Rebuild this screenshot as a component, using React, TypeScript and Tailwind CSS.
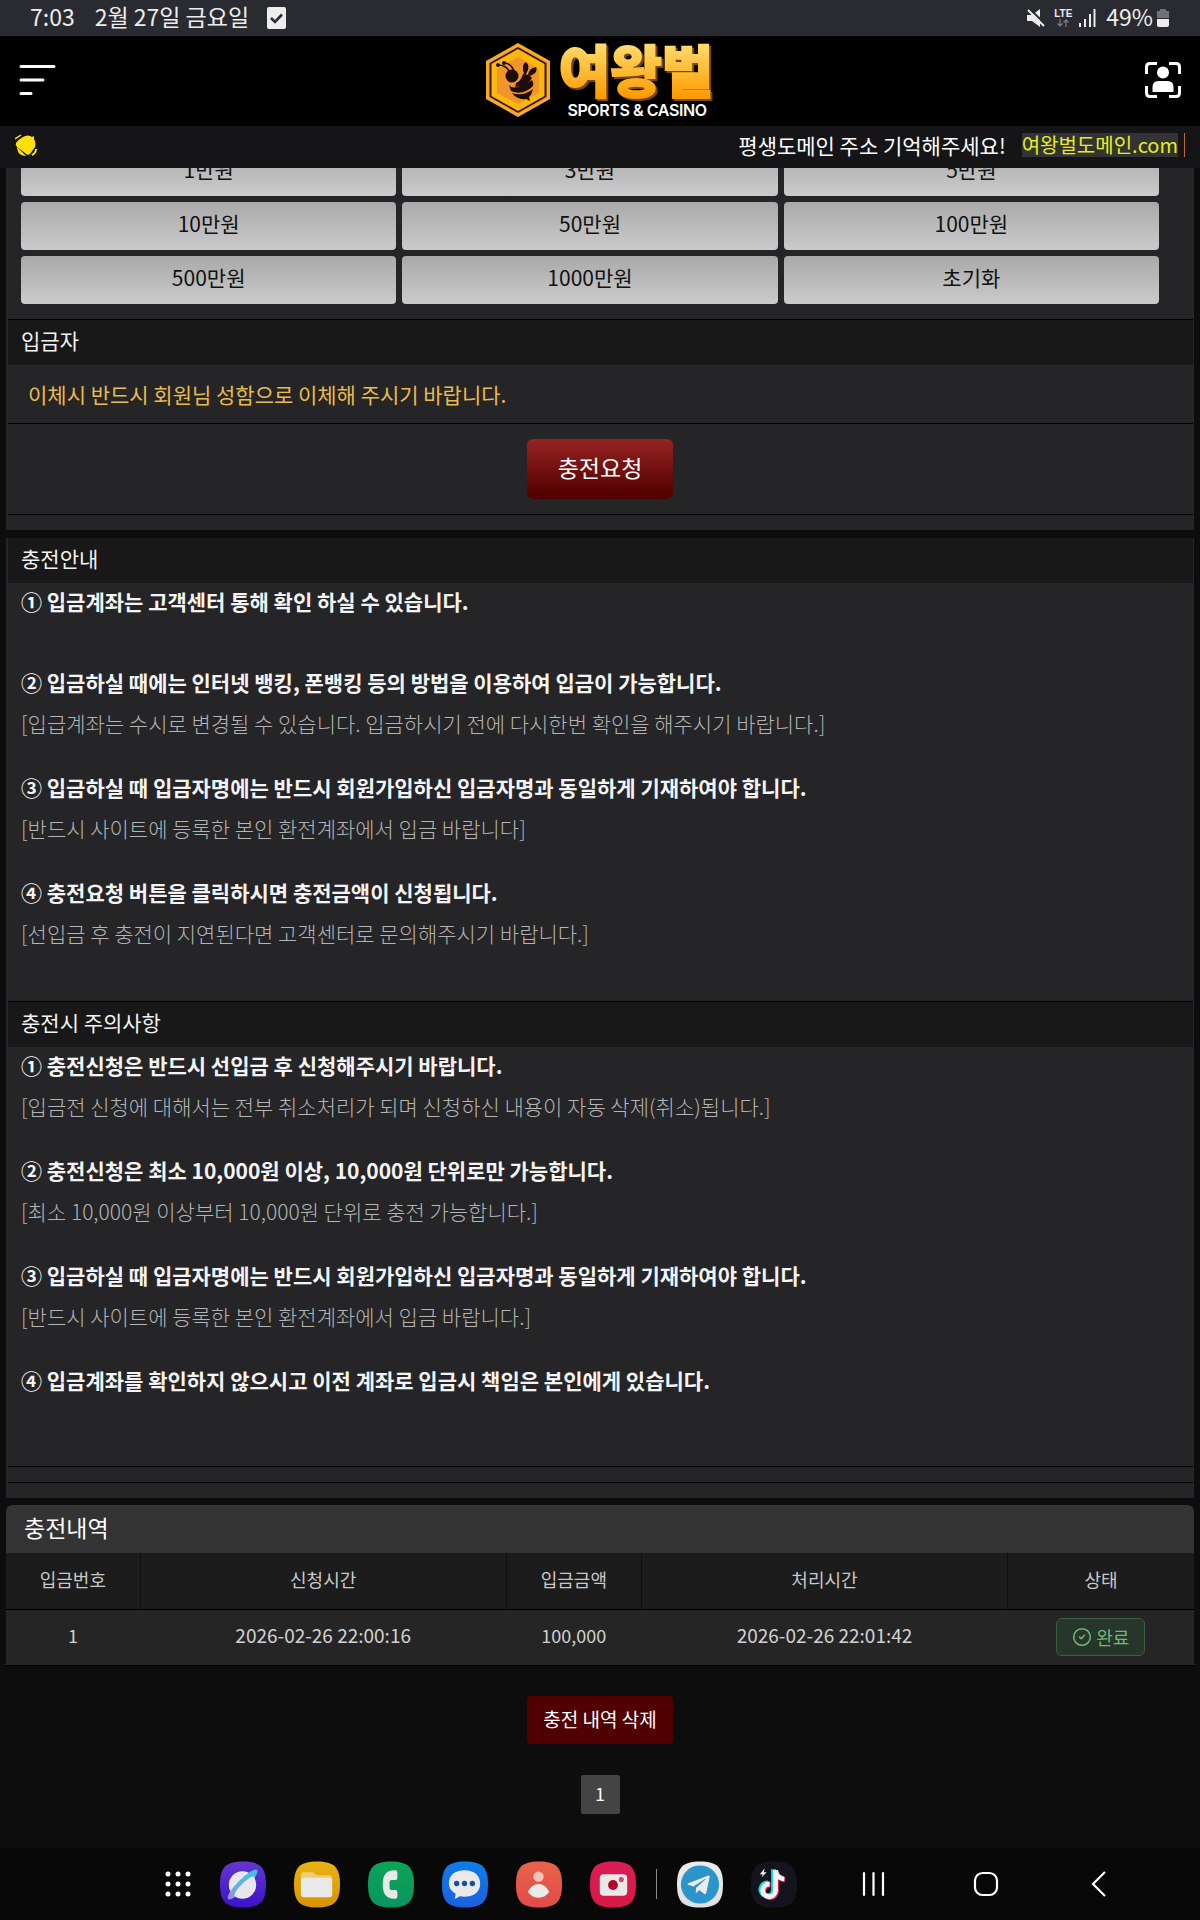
import type { ReactNode } from "react";
import { FaTelegramPlane } from "react-icons/fa";
import { LuCircleCheck } from "react-icons/lu";

const amounts = ["1만원", "3만원", "5만원", "10만원", "50만원", "100만원", "500만원", "1000만원", "초기화"];

const guide = [
    { title: "② 입금하실 때에는 인터넷 뱅킹, 폰뱅킹 등의 방법을 이용하여 입금이 가능합니다.", note: "[입급계좌는 수시로 변경될 수 있습니다. 입금하시기 전에 다시한번 확인을 해주시기 바랍니다.]" },
    { title: "③ 입금하실 때 입금자명에는 반드시 회원가입하신 입금자명과 동일하게 기재하여야 합니다.", note: "[반드시 사이트에 등록한 본인 환전계좌에서 입금 바랍니다]" },
    { title: "④ 충전요청 버튼을 클릭하시면 충전금액이 신청됩니다.", note: "[선입금 후 충전이 지연된다면 고객센터로 문의해주시기 바랍니다.]" },
];

const cautions = [
    { title: "① 충전신청은 반드시 선입금 후 신청해주시기 바랍니다.", note: "[입금전 신청에 대해서는 전부 취소처리가 되며 신청하신 내용이 자동 삭제(취소)됩니다.]" },
    { title: "② 충전신청은 최소 10,000원 이상, 10,000원 단위로만 가능합니다.", note: "[최소 10,000원 이상부터 10,000원 단위로 충전 가능합니다.]" },
    { title: "③ 입금하실 때 입금자명에는 반드시 회원가입하신 입금자명과 동일하게 기재하여야 합니다.", note: "[반드시 사이트에 등록한 본인 환전계좌에서 입금 바랍니다.]" },
    { title: "④ 입금계좌를 확인하지 않으시고 이전 계좌로 입금시 책임은 본인에게 있습니다." },
];

function StatusBar() {
    return <div className="flex h-9 items-center justify-between bg-[#2a2b30] pr-[31px] pl-[30px] text-[23px] leading-8 text-[#ededed]">
        <div className="flex items-center">
            <span className="pb-1">7:03</span>
            <span className="ml-5 pb-1">2월 27일 금요일</span>
            <svg className="ml-[18px] h-6 w-[19px]" viewBox="0 0 19 24">
                <rect y="1" width="19" height="22" rx="2" fill="#ededed" />
                <path d="M4 12l4 4 7-7.500" fill="none" stroke="#2a2b30" strokeWidth="2.600" />
            </svg>
        </div>
        <div className="flex items-center">
            <svg className="h-[18px] w-[18px]" viewBox="0 0 18 18" fill="#ededed">
                <path d="M0 6h5l8-6v18l-8-6H0z" />
                <path d="M2 -1l17 17" stroke="#2a2b30" strokeWidth="2" />
                <path d="M1 1l16 16" stroke="#ededed" strokeWidth="2" />
            </svg>
            <div className="ml-2 flex w-5 flex-col items-center">
                <span className="font-['Liberation_Sans'] text-[10px] leading-[10px] font-bold">LTE</span>
                <svg className="h-2 w-3" viewBox="0 0 12 8" fill="none" stroke="#77787c" strokeWidth="1.300">
                    <path d="M3 0v7M.5 4.500L3 7l2.500-2.500M9 8V1M6.500 3.500L9 1l2.500 2.500" />
                </svg>
            </div>
            <svg className="ml-1.5 h-[18px] w-[17px]" viewBox="0 0 17 18" stroke="#ededed" strokeWidth="2">
                <path d="M1 14v4M6 10v8M11 5v13" />
                <path d="M15.500 0v18" />
            </svg>
            <span className="ml-2.5 pb-1">49%</span>
            <svg className="ml-1 h-[18px] w-3" viewBox="0 0 12 18">
                <path d="M3 0h6v2h3v7H0V2h3z" fill="#717276" />
                <path d="M0 10h12v6q0 2-2 2H2q-2 0-2-2z" fill="#ededed" />
            </svg>
        </div>
    </div>
}

function Logo() {
    return <a href="#" className="flex items-center gap-1.5">
        <svg className="h-[76px] w-[66px]" viewBox="0 0 66 76">
            <path d="M33 1L65 19v38L33 75 1 57V19z" fill="#f9a92b" />
            <path d="M33 5L61.500 21v34L33 71 4.500 55V21z" fill="#3a1606" />
            <path d="M33 7L59.500 22v32L33 69 6.500 54V22z" fill="#fbb80c" />
            <path d="M33 15L54 27v24L33 62 12 51V27z" fill="#f0952b" />
            <g fill="#1d0c08">
                <circle cx="27" cy="34" r="6.500" />
                <path d="M39 32Q36 22 41 20Q46 24 41 32z" />
                <path d="M43 33Q44 26 51 25Q54 30 45 34z" />
                <path d="M31 41Q36 39 38 32Q44 32 47 36Q42 45 30 45z" />
                <path d="M24 43Q29 50 47 38Q49 41 48 44Q38 54 26 49z" />
                <path d="M27 51Q38 55 48 47Q47 52 44 55L45 59 41 57Q32 58 27 51z" />
                <circle cx="13" cy="23" r="2" />
                <circle cx="19" cy="21" r="2" />
            </g>
            <path d="M13 23Q21 23 24 29M19 21Q26 21 29 29" fill="none" stroke="#1d0c08" strokeWidth="1.500" />
        </svg>
        <svg className="h-[76px] w-[158px] overflow-visible" viewBox="0 0 158 76" textAnchor="middle">
            <defs>
                <linearGradient id="gold" gradientUnits="userSpaceOnUse" x1="0" y1="4" x2="0" y2="56">
                    <stop stopColor="#ffd968" />
                    <stop offset="1" stopColor="#ff9a00" />
                </linearGradient>
            </defs>
            <text x="79" y="50" fontSize="56" fontWeight="900" fill="url(#gold)" stroke="url(#gold)" strokeWidth="2" className="drop-shadow-[2px_2px_0_#7a4700]">여왕벌</text>
            <text x="80" y="74" fontFamily="Inter" fontSize="16" fontWeight="600" fill="#fff" className="tracking-tight">SPORTS &amp; CASINO</text>
        </svg>
    </a>
}

function Header() {
    return <header className="grid h-[90px] grid-cols-3 items-center bg-black px-[18px] pb-0.5">
        <button type="button" aria-label="메뉴" className="justify-self-start">
            <svg className="h-8 w-10" viewBox="0 0 40 32" stroke="#fff" strokeWidth="3" strokeLinecap="round">
                <path d="M3 2.500h33M3 16h22M3 29.500h10" />
            </svg>
        </button>
        <div className="justify-self-center">
            <Logo />
        </div>
        <button type="button" aria-label="내 정보" className="justify-self-end">
            <svg className="h-[38px] w-[38px]" viewBox="0 0 38 38" fill="#fff">
                <path d="M13 2.500H6Q2.500 2.500 2.500 6v7M25 2.500h7Q35.500 2.500 35.500 6v7M13 35.500H6Q2.500 35.500 2.500 32v-7M25 35.500h7Q35.500 35.500 35.500 32v-7" fill="none" stroke="#fff" strokeWidth="3" />
                <circle cx="19" cy="11.500" r="6" />
                <path d="M8.500 31v-5q0-6 6-6h9q6 0 6 6v5z" />
            </svg>
        </button>
    </header>
}

function Notice() {
    return <div className="flex h-[42px] items-center justify-between bg-[#151517] px-[15px] pb-1 text-[21px] text-white">
        <svg className="h-[22px] w-[22px]" viewBox="0 0 22 22" fill="#ffdf0e">
            <path d="M1 9Q4 5 8 3Q13 0 17 3l2-1v3Q21 8 20 13L15 20Q12 22 10 19L2 13Q0 11 1 9z" />
            <path d="M0 5L6 1M3 15q1 5 6 6z" stroke="#ffdf0e" strokeWidth="1.500" />
            <path d="M17 21q4-2 4-6" fill="none" stroke="#ffdf0e" strokeWidth="2" />
        </svg>
        <div className="flex items-center leading-6">
            <span>평생도메인 주소 기억해주세요!</span>
            <a href="#" className="ml-4 bg-[#333] text-[20px] text-[#e6ee1c]">여왕벌도메인.com</a>
            <span className="ml-1.5 h-6 w-px bg-[#c06a3a]" />
        </div>
    </div>
}

function SectionTitle({ children }: { children: ReactNode }) {
    return <h2 className="h-[45px] bg-[#181818] pl-[13px] text-[21px] leading-10 text-[#f2f2f2]">{children}</h2>
}

function GuideItem({ title, note }: { title: string; note?: string }) {
    return <li>
        <p className="font-bold text-[#f4f4f4]">{title}</p>
        {note && <p className="mt-[5px] mb-7 font-light text-[#b4b4b4]">{note}</p>}
    </li>
}

function History() {
    return <section className="mt-[7px]">
        <h2 className="h-12 rounded-t-md bg-[#333] pl-[18px] text-[23px] leading-11 text-white">충전내역</h2>
        <table className="w-full table-fixed border-collapse text-center text-lg text-[#d2d2d2]">
            <colgroup>
                <col className="w-[11.3%]" />
                <col className="w-[30.8%]" />
                <col className="w-[11.4%]" />
                <col className="w-[30.8%]" />
                <col />
            </colgroup>
            <thead>
                <tr className="h-14 border-b border-black bg-[#1c1c1c] text-[#c8c8c8]">
                    <th className="border-r border-[#101010] pb-1 font-normal">입금번호</th>
                    <th className="border-r border-[#101010] pb-1 font-normal">신청시간</th>
                    <th className="border-r border-[#101010] pb-1 font-normal">입금금액</th>
                    <th className="border-r border-[#101010] pb-1 font-normal">처리시간</th>
                    <th className="pb-1 font-normal">상태</th>
                </tr>
            </thead>
            <tbody>
                <tr className="h-14 border-b border-black bg-[#252525]">
                    <td className="pb-1">1</td>
                    <td className="pb-1 text-[19px]">2026-02-26 22:00:16</td>
                    <td className="pb-1">100,000</td>
                    <td className="pb-1 text-[19px]">2026-02-26 22:01:42</td>
                    <td>
                        <span className="inline-flex h-[38px] w-[89px] items-center justify-center gap-1 rounded-md border border-[#3b5f40] bg-[#27362a] align-middle leading-8 text-[#72b877]">
                            <LuCircleCheck className="h-5 w-5" strokeWidth={1.8} />
                            완료
                        </span>
                    </td>
                </tr>
            </tbody>
        </table>
    </section>
}

// rounded-square backplate shared by every dock app
function AppIcon({ label, from, to, children }: { label: string; from: string; to: string; children: ReactNode }) {
    const id = "bg-" + label;
    return <button type="button" aria-label={label}>
        <svg className="h-[47px] w-[46px]" viewBox="0 0 47 47">
            <defs>
                <linearGradient id={id} x2="0" y2="1">
                    <stop stopColor={from} />
                    <stop offset="1" stopColor={to} />
                </linearGradient>
            </defs>
            <path d="M23.500 0C41 0 47 6 47 23.500S41 47 23.500 47 0 41 0 23.500 6 0 23.500 0z" fill={`url(#${id})`} />
            {children}
        </svg>
    </button>
}

function Dock() {
    return <nav className="flex h-[72px] items-center bg-[#080808] pl-[164px]">
        <div className="flex items-center gap-7">
            <button type="button" aria-label="앱">
                <svg className="h-7 w-7" viewBox="0 0 28 28" fill="none" stroke="#fff" strokeWidth="5" strokeLinecap="round">
                    <path d="M4 4h0M14 4h0M24 4h0M4 14h0M14 14h0M24 14h0M4 24h0M14 24h0M24 24h0" />
                </svg>
            </button>
            <AppIcon label="internet" from="#6437cf" to="#3b12c8">
                <defs>
                    <linearGradient id="ring" x1="0" y1="0" x2="1" y2="0">
                        <stop stopColor="#9a8aea" />
                        <stop offset=".4" stopColor="#62b4dc" />
                        <stop offset="1" stopColor="#3fc4e0" />
                    </linearGradient>
                </defs>
                <circle cx="23" cy="24" r="14" fill="#e8e8ec" />
                <ellipse cx="23" cy="23.500" rx="21" ry="5" transform="rotate(-45 23 23.500)" fill="url(#ring)" />
                <ellipse cx="25" cy="25.500" rx="14" ry="3.500" transform="rotate(-45 25 25.500)" fill="#e8e8ec" />
            </AppIcon>
            <AppIcon label="files" from="#e8b414" to="#d89200">
                <path d="M7 14q0-3 3-3h9l5 3h12q3 0 3 3v4H7z" fill="#f0cd72" />
                <rect x="7" y="16.500" width="32" height="20" rx="3" fill="#e9e9e9" />
            </AppIcon>
            <AppIcon label="phone" from="#0ca458" to="#089460">
                <path d="M28 9q2 0 2 2v6q0 2-2 2h-4q-2 0-2 2v6q0 2 2 2h4q2 0 2 2v5q0 2-2 2-13 1-13-14.500T28 9z" fill="#e9e9e9" />
            </AppIcon>
            <AppIcon label="messages" from="#0e7ee8" to="#1c60e0">
                <path d="M23 9c10 0 16 5 16 13.500S33 36 23 36q-3 0-5-.5-2 2-5 2.500l1-5Q7 29 7 22.500C7 14 13 9 23 9z" fill="#e9e9e9" />
                <path d="M15 22.500h0M23 22.500h0M31 22.500h0" stroke="#17539c" strokeWidth="5.500" strokeLinecap="round" />
            </AppIcon>
            <AppIcon label="contacts" from="#e9634b" to="#e14c48">
                <circle cx="23" cy="15.500" r="5.300" fill="#f3c3b8" />
                <path d="M12 31Q16 23 23 23t11 8Q30 37 23 37T12 31z" fill="#ececec" />
            </AppIcon>
            <AppIcon label="camera" from="#d81e56" to="#d81846">
                <rect x="10" y="13" width="28" height="22" rx="4" fill="#e9e9e9" />
                <circle cx="23.500" cy="24" r="5" fill="#b4042c" />
                <circle cx="32" cy="18.500" r="2.600" fill="#d2456b" />
            </AppIcon>
        </div>
        <span className="mx-5 h-[30px] w-px bg-[#8a8a8a]" />
        <div className="flex items-center gap-7">
            <AppIcon label="telegram" from="#ececec" to="#e0e0e0">
                <circle cx="23.500" cy="23.500" r="19.500" fill="#2b95cb" />
                <FaTelegramPlane x="9" y="11" size="26" color="#ececec" />
            </AppIcon>
            <AppIcon label="tiktok" from="#14141f" to="#14141f">
                <g fill="none" strokeWidth="5">
                    <path d="M24 8v21a6.500 6.500 0 1 1-6-7M24 8q1 8 9 9" stroke="#20d5cf" transform="translate(-1 0)" />
                    <path d="M24 8v21a6.500 6.500 0 1 1-6-7M24 8q1 8 9 9" stroke="#e8254f" transform="translate(2 2)" />
                    <path d="M24 8v21a6.500 6.500 0 1 1-6-7M24 8q1 8 9 9" stroke="#f2f2f2" transform="translate(1 1)" />
                </g>
                <path d="M14 7l-5 6h3l-1 3 5-5h-3z" fill="#f2f2f2" />
            </AppIcon>
        </div>
        <div className="ml-14 flex items-center gap-[73px]">
            <button type="button" aria-label="최근 앱">
                <svg className="h-7 w-10" viewBox="0 0 40 28" stroke="#fff" strokeWidth="2.200" strokeLinecap="round">
                    <path d="M11 3v22M20.500 3v22M30 3v22" />
                </svg>
            </button>
            <button type="button" aria-label="홈">
                <svg className="h-7 w-10" viewBox="0 0 40 28" fill="none" stroke="#fff" strokeWidth="2.200">
                    <rect x="9" y="3" width="22" height="22" rx="7.500" />
                </svg>
            </button>
            <button type="button" aria-label="뒤로">
                <svg className="h-7 w-10" viewBox="0 0 40 28" fill="none" stroke="#fff" strokeWidth="2.200">
                    <path d="M26 2L14 14l12 12" />
                </svg>
            </button>
        </div>
    </nav>
}

export default function App() {
    return <div className="flex min-h-screen flex-col bg-[#0d0d0d] font-['Noto_Sans_CJK_KR',sans-serif]">
        <div className="sticky top-0 z-10">
            <StatusBar />
            <Header />
            <Notice />
        </div>
        <main className="flex-1 px-1.5">
            <section className="-mt-5 border-r border-l-2 border-[#252527] bg-[#252527] pb-[15px]">
                <div className="grid grid-cols-3 gap-1.5 border-b border-black pr-[34px] pb-[15px] pl-[13px]">
                    {amounts.map((amount) => (
                        <button key={amount} type="button" className="h-12 rounded bg-linear-to-b from-[#a9a9a9] to-[#cbcbcb] pb-1 text-[21px] text-[#111]">{amount}</button>
                    ))}
                </div>
                <SectionTitle>입금자</SectionTitle>
                <p className="border-b border-black pl-5 text-[21px] leading-[58px] text-[#e9bb4c]">이체시 반드시 회원님 성함으로 이체해 주시기 바랍니다.</p>
                <div className="flex justify-center border-b border-black py-[15px] pr-px">
                    <button type="button" className="h-[60px] w-[146px] rounded-md bg-linear-to-b from-[#972222] to-[#500000] pb-1 text-[23px] text-white">충전요청</button>
                </div>
            </section>

            <section className="mt-2 border-r border-l-2 border-[#252527] bg-[#252527] pb-[15px]">
                <SectionTitle>충전안내</SectionTitle>
                <div className="border-b border-black pb-[22px] pl-[13px] text-[21px] leading-9">
                    <p className="mb-[45px] font-bold text-[#f4f4f4]">① 입금계좌는 고객센터 통해 확인 하실 수 있습니다.</p>
                    <ul>
                        {guide.map((item) => <GuideItem key={item.title} title={item.title} note={item.note} />)}
                    </ul>
                </div>
                <SectionTitle>충전시 주의사항</SectionTitle>
                <ul className="border-b border-black pb-[68px] pl-[13px] text-[21px] leading-9">
                    {cautions.map((item) => <GuideItem key={item.title} title={item.title} note={item.note} />)}
                </ul>
                <div className="h-4 border-b border-black" />
            </section>

            <History />

            <div className="mt-[30px] flex flex-col items-center gap-[31px] pb-8">
                <button type="button" className="h-12 w-[146px] rounded bg-[#500000] text-[19px] text-white">충전 내역 삭제</button>
                <a href="#" className="h-[39px] w-[39px] rounded-xs bg-[#444] text-center text-lg leading-9 text-white">1</a>
            </div>
        </main>
        <Dock />
    </div>
}
